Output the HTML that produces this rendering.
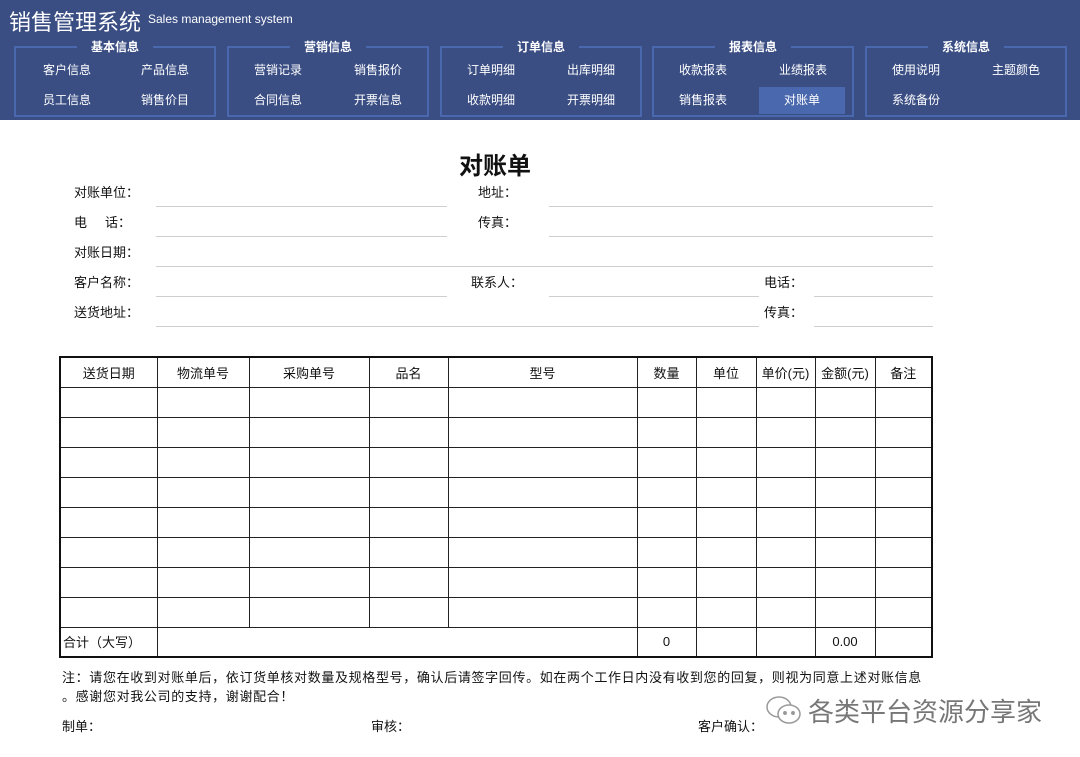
<!DOCTYPE html>
<html><head><meta charset="utf-8"><style>
*{margin:0;padding:0;box-sizing:border-box}
body{width:1080px;height:757px;background:#fff;position:relative;overflow:hidden;font-family:"Liberation Sans","Noto Sans CJK SC",sans-serif;font-size:13px;color:#111}
.hd{position:absolute;left:0;top:0;width:1080px;height:120px;background:#3a4e84}
.ttl{position:absolute;left:9px;top:5px;color:#fff;font-size:22px}
.sub{position:absolute;left:148px;top:12px;color:#fff;font-size:12px}
.g{position:absolute;top:46px;width:202px;height:71px;border:2px solid #4a68ad}
.g .gt{position:absolute;top:-10px;left:0;width:100%;text-align:center;color:#fff;font-size:12px;font-weight:bold}
.g .gt span{background:#3a4e84;padding:0 14px}
.g .b{position:absolute;color:#fff;font-size:12px;width:86px;height:27px;line-height:27px;text-align:center}
.sel{background:#4a68ad}
.t{position:absolute;font-size:13px}
.u{position:absolute;height:1px;background:#cfcfcf}
table{position:absolute;left:59px;top:356px;border-collapse:collapse;border:2px solid #111}
td{border:1px solid #222;height:30px;text-align:center;font-size:13px;padding:0}
</style></head><body>
<div class="hd">
<div class="ttl">销售管理系统</div><div class="sub">Sales management system</div>
<div class="g" style="left:14px"><div class="gt"><span>基本信息</span></div>
<div class="b" style="left:8px;top:9px">客户信息</div><div class="b" style="left:106px;top:9px">产品信息</div>
<div class="b" style="left:8px;top:39px">员工信息</div><div class="b" style="left:106px;top:39px">销售价目</div></div>
<div class="g" style="left:227px"><div class="gt"><span>营销信息</span></div>
<div class="b" style="left:6px;top:9px">营销记录</div><div class="b" style="left:106px;top:9px">销售报价</div>
<div class="b" style="left:6px;top:39px">合同信息</div><div class="b" style="left:106px;top:39px">开票信息</div></div>
<div class="g" style="left:440px"><div class="gt"><span>订单信息</span></div>
<div class="b" style="left:6px;top:9px">订单明细</div><div class="b" style="left:106px;top:9px">出库明细</div>
<div class="b" style="left:6px;top:39px">收款明细</div><div class="b" style="left:106px;top:39px">开票明细</div></div>
<div class="g" style="left:652px"><div class="gt"><span>报表信息</span></div>
<div class="b" style="left:6px;top:9px">收款报表</div><div class="b" style="left:106px;top:9px">业绩报表</div>
<div class="b" style="left:6px;top:39px">销售报表</div><div class="b sel" style="left:105px;top:39px">对账单</div></div>
<div class="g" style="left:865px"><div class="gt"><span>系统信息</span></div>
<div class="b" style="left:6px;top:9px">使用说明</div><div class="b" style="left:106px;top:9px">主题颜色</div>
<div class="b" style="left:6px;top:39px">系统备份</div></div>
</div>
<div class="t" style="left:459px;top:146px;font-size:24px;font-weight:bold">对账单</div>
<div class="t" style="left:74px;top:182px">对账单位：</div><div class="t" style="left:478px;top:182px">地址：</div>
<div class="t" style="left:74px;top:212px">电&nbsp;&nbsp;&nbsp;&nbsp;&nbsp;话：</div><div class="t" style="left:478px;top:212px">传真：</div>
<div class="t" style="left:74px;top:242px">对账日期：</div>
<div class="t" style="left:74px;top:272px">客户名称：</div><div class="t" style="left:471px;top:272px">联系人：</div><div class="t" style="left:764px;top:272px">电话：</div>
<div class="t" style="left:74px;top:302px">送货地址：</div><div class="t" style="left:764px;top:302px">传真：</div>
<div class="u" style="left:156px;top:206px;width:291px"></div><div class="u" style="left:549px;top:206px;width:384px"></div>
<div class="u" style="left:156px;top:236px;width:291px"></div><div class="u" style="left:549px;top:236px;width:384px"></div>
<div class="u" style="left:156px;top:266px;width:777px"></div>
<div class="u" style="left:156px;top:296px;width:291px"></div><div class="u" style="left:549px;top:296px;width:210px"></div><div class="u" style="left:814px;top:296px;width:119px"></div>
<div class="u" style="left:156px;top:326px;width:603px"></div><div class="u" style="left:814px;top:326px;width:119px"></div>
<table>
<colgroup><col style="width:97px"><col style="width:92px"><col style="width:120px"><col style="width:79px"><col style="width:189px"><col style="width:59px"><col style="width:60px"><col style="width:59px"><col style="width:60px"><col style="width:57px"></colgroup>
<tr><td>送货日期</td><td>物流单号</td><td>采购单号</td><td>品名</td><td>型号</td><td>数量</td><td>单位</td><td>单价(元)</td><td>金额(元)</td><td>备注</td></tr>
<tr><td></td><td></td><td></td><td></td><td></td><td></td><td></td><td></td><td></td><td></td></tr>
<tr><td></td><td></td><td></td><td></td><td></td><td></td><td></td><td></td><td></td><td></td></tr>
<tr><td></td><td></td><td></td><td></td><td></td><td></td><td></td><td></td><td></td><td></td></tr>
<tr><td></td><td></td><td></td><td></td><td></td><td></td><td></td><td></td><td></td><td></td></tr>
<tr><td></td><td></td><td></td><td></td><td></td><td></td><td></td><td></td><td></td><td></td></tr>
<tr><td></td><td></td><td></td><td></td><td></td><td></td><td></td><td></td><td></td><td></td></tr>
<tr><td></td><td></td><td></td><td></td><td></td><td></td><td></td><td></td><td></td><td></td></tr>
<tr><td></td><td></td><td></td><td></td><td></td><td></td><td></td><td></td><td></td><td></td></tr>
<tr><td style="text-align:left;padding-left:2px">合计（大写）</td><td colspan="4"></td><td>0</td><td></td><td></td><td>0.00</td><td></td></tr>
</table>
<div class="t" style="left:62px;top:667px;letter-spacing:0.65px">注：请您在收到对账单后，依订货单核对数量及规格型号，确认后请签字回传。如在两个工作日内没有收到您的回复，则视为同意上述对账信息</div>
<div class="t" style="left:62px;top:686px;letter-spacing:0.65px">。感谢您对我公司的支持，谢谢配合！</div>
<div class="t" style="left:62px;top:716px">制单：</div><div class="t" style="left:371px;top:716px">审核：</div><div class="t" style="left:698px;top:716px">客户确认：</div>
<svg style="position:absolute;left:764px;top:694px" width="40" height="34" viewBox="0 0 40 34" fill="none" stroke="#999" stroke-width="1.5"><ellipse cx="15" cy="13" rx="12" ry="10"/><ellipse cx="25" cy="20" rx="11" ry="9" fill="#fff"/><circle cx="21" cy="19" r="1.2" fill="#999"/><circle cx="29" cy="19" r="1.2" fill="#999"/></svg>
<div class="t" style="left:808px;top:692px;font-size:26px;color:#777">各类平台资源分享家</div>
</body></html>
